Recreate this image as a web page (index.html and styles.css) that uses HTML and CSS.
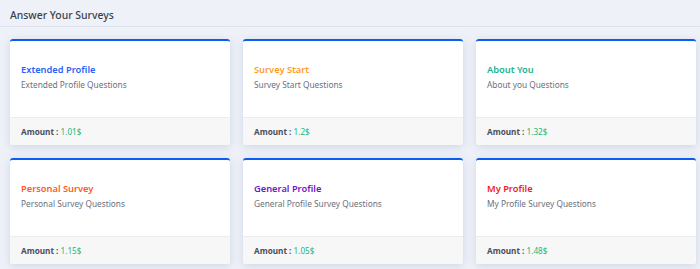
FILE: index.html
```html
<html>
<head>
<meta name="viewport" content="width=device-width, initial-scale=1" />
<title>Answer Your Surveys</title>
<link rel="stylesheet" href="styles.css">
</head>
<body>

<h1 class="page-title">Answer Your Surveys</h1>

<div class="surveys">
    <div class="survey">
        <div class="survey-body">
            <h2 class="survey-name blue">Extended Profile</h2>
            <p class="survey-desc">Extended Profile Questions</p>
        </div>
        <div class="survey-foot"><b>Amount :</b> <span class="amount">1.01$</span></div>
    </div>
    <div class="survey">
        <div class="survey-body">
            <h2 class="survey-name orange">Survey Start</h2>
            <p class="survey-desc">Survey Start Questions</p>
        </div>
        <div class="survey-foot"><b>Amount :</b> <span class="amount">1.2$</span></div>
    </div>
    <div class="survey">
        <div class="survey-body">
            <h2 class="survey-name green">About You</h2>
            <p class="survey-desc">About you Questions</p>
        </div>
        <div class="survey-foot"><b>Amount :</b> <span class="amount">1.32$</span></div>
    </div>
    <div class="survey">
        <div class="survey-body">
            <h2 class="survey-name coral">Personal Survey</h2>
            <p class="survey-desc">Personal Survey Questions</p>
        </div>
        <div class="survey-foot"><b>Amount :</b> <span class="amount">1.15$</span></div>
    </div>
    <div class="survey">
        <div class="survey-body">
            <h2 class="survey-name purple">General Profile</h2>
            <p class="survey-desc">General Profile Survey Questions</p>
        </div>
        <div class="survey-foot"><b>Amount :</b> <span class="amount">1.05$</span></div>
    </div>
    <div class="survey">
        <div class="survey-body">
            <h2 class="survey-name red">My Profile</h2>
            <p class="survey-desc">My Profile Survey Questions</p>
        </div>
        <div class="survey-foot"><b>Amount :</b> <span class="amount">1.48$</span></div>
    </div>
</div>

</body>
</html>
```

FILE: styles.css
```css
body { margin: 0; background-color: #eef1f8; font-family: "Noto Sans", sans-serif; color: #3b4350; }

.page-title { margin: 0; padding: 9px 10px 4px; font-size: 10.4px; font-weight: 500; line-height: 13px; color: #3a3f4a; border-bottom: 1px solid #dde2ec; }

.surveys { display: grid; grid-template-columns: repeat(3, 220px); gap: 13px; padding: 12px 4px 0 10px; }

.survey { display: flex; flex-direction: column; height: 104px; background-color: #fff; border-top: 2px solid #0b5cf0; border-radius: 3px; box-shadow: 0 2px 8px rgba(150, 165, 195, 0.35); overflow: hidden; }
.survey-body { flex: 1; padding: 22px 11px 0; }
.survey-name { margin: 0; font-size: 9.3px; font-weight: 600; line-height: 13px; }
.survey-desc { margin: 3px 0 0; font-size: 8.3px; line-height: 12px; color: #6b717c; }
.survey-foot { height: 27px; line-height: 27px; padding: 0 11px; background-color: #f7f7f8; border-top: 1px solid #ececef; font-size: 8.2px; color: #4a505c; }
.survey-foot b { font-weight: 700; }
.survey-foot .amount { color: #21b87a; }

.blue { color: #2a62f5; }
.orange { color: #ff9d1f; }
.green { color: #19b48e; }
.coral { color: #ff5a1f; }
.purple { color: #6f17c9; }
.red { color: #ee1c1c; }
```
